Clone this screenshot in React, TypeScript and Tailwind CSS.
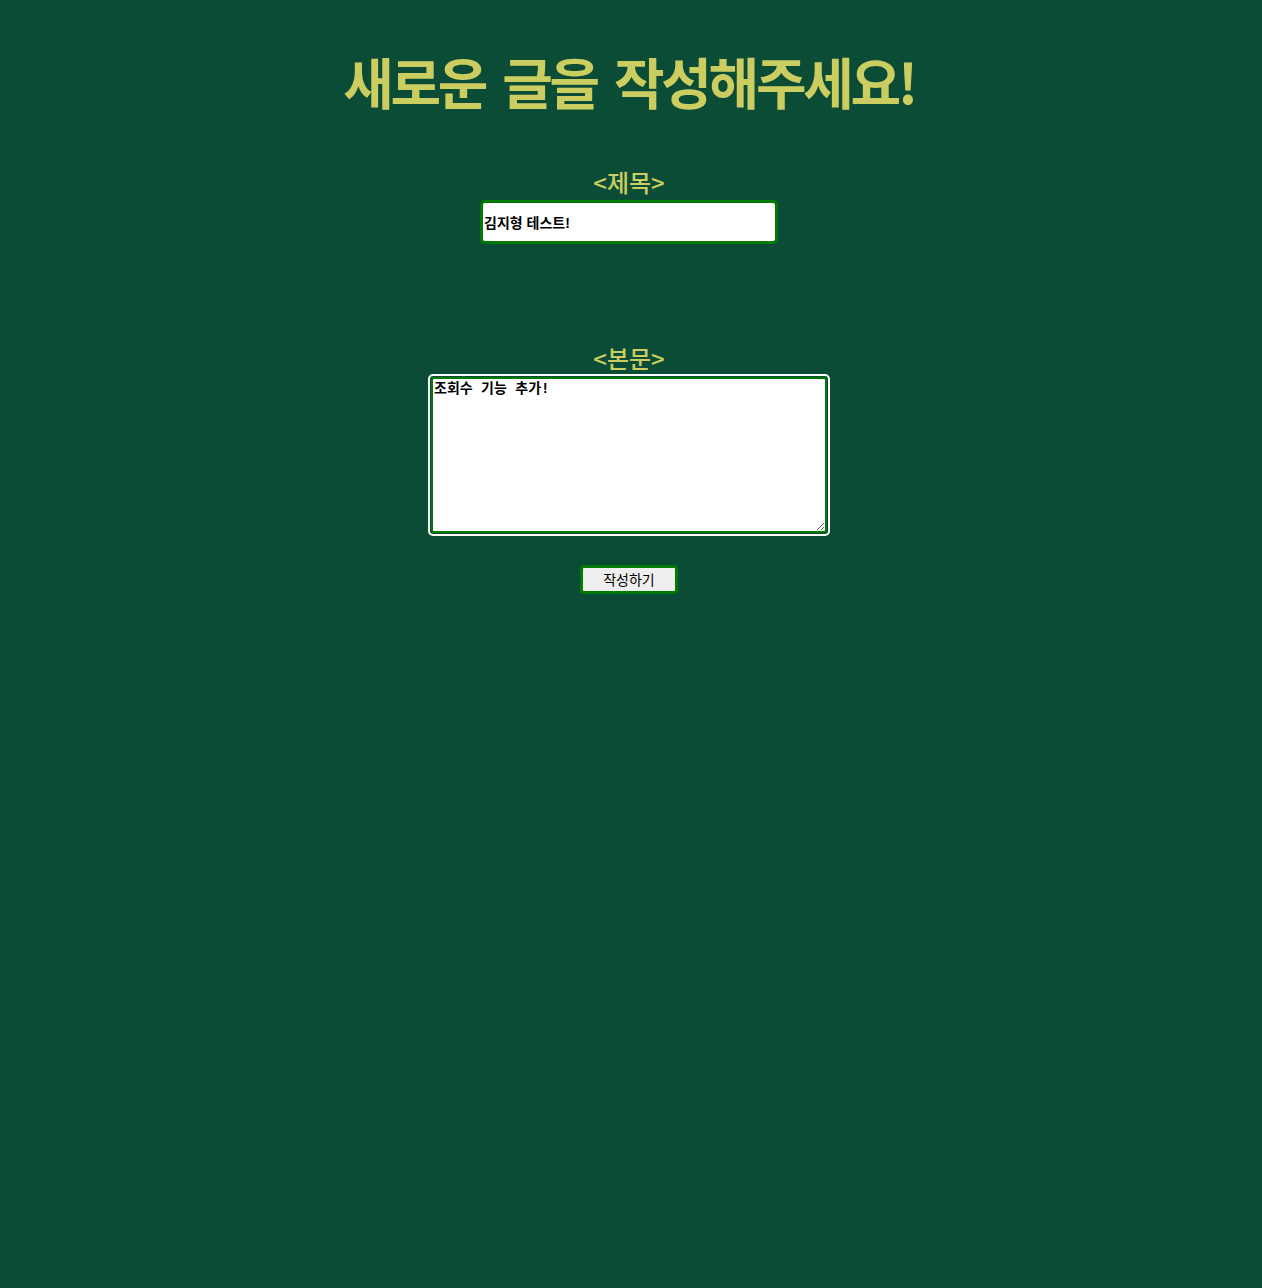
import React from 'react';

const App: React.FC = () => {
  return (
    <div className="min-h-screen bg-[#0b4c36] flex flex-col items-center pr-[4px]" style={{ fontFamily: '"Noto Sans CJK KR", "Noto Sans", sans-serif' }}>
      {/* Title */}
      <h1 className="mt-[42px] text-[55px] leading-[76px] font-bold tracking-[-0.06em] [word-spacing:8px] text-[#cbcd61]">
        새로운 글을 작성해주세요!
      </h1>

      {/* Subject */}
      <label className="mt-[49px] text-[24px] leading-[30px] font-medium text-[#cbcd61]">&lt;제목&gt;</label>
      <input
        type="text"
        defaultValue="김지형 테스트!"
        className="mt-[3px] w-[298px] h-[44px] px-[1px] bg-white border-[3px] border-[#007a00] rounded-[5px] text-[14px] font-bold text-black outline-none"
        style={{ fontFamily: '"Liberation Sans", "Noto Sans CJK KR", sans-serif' }}
      />

      {/* Body */}
      <label className="mt-[99px] text-[24px] leading-[30px] font-medium text-[#cbcd61]">&lt;본문&gt;</label>
      <div className="mt-[1px] p-[1px] rounded-[5px] border-2 border-white">
        <textarea
          defaultValue="조회수 기능 추가!"
          className="block w-[396px] h-[156px] p-[1px] bg-white border-2 border-[#007a00] rounded-[3px] text-[14px] leading-[17px] font-bold text-black outline-none resize"
          style={{ fontFamily: '"DejaVu Sans Mono", "Noto Sans CJK KR", monospace' }}
        />
      </div>

      {/* Submit */}
      <button className="mt-[29px] w-[98px] h-[29px] bg-[#efefef] border-[3px] border-[#007a00] rounded-[4px] text-[14px] text-black">
        작성하기
      </button>
    </div>
  );
};

export default App;
